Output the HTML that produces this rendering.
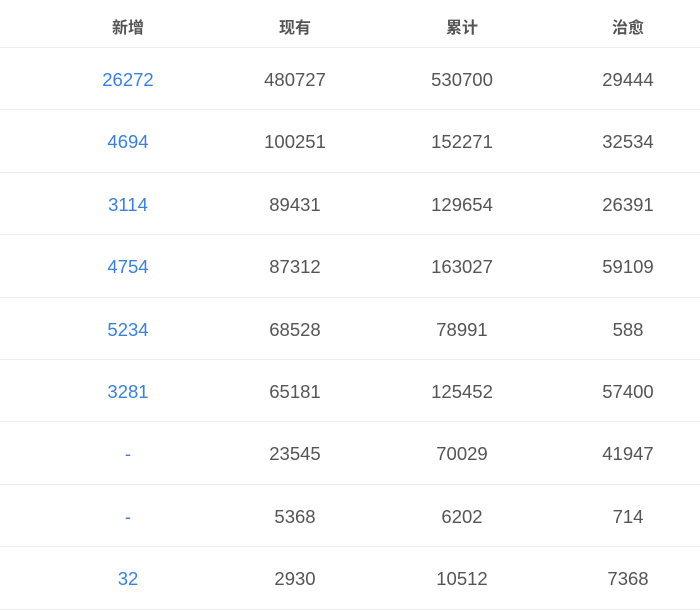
<!DOCTYPE html>
<html><head><meta charset="utf-8"><style>
body{margin:0;width:700px;height:600px;background:#fff;overflow:hidden;font-family:"Liberation Sans","Noto Sans CJK SC",sans-serif;}
.row{position:absolute;left:0;width:700px;border-bottom:1px solid #ededed;}
.c{position:absolute;width:200px;text-align:center;color:#555;font-size:18.5px;}
.h .c{font-weight:bold;font-size:16px;color:#555;}
</style></head><body>
<div class="row h" style="top:0;height:47px"><div class="c" style="left:28px;top:14px">新增</div><div class="c" style="left:195px;top:14px">现有</div><div class="c" style="left:362px;top:14px">累计</div><div class="c" style="left:528px;top:14px">治愈</div></div>
<div id="rows"></div>
<script>
var d=[["26272","480727","530700","29444"],["4694","100251","152271","32534"],["3114","89431","129654","26391"],["4754","87312","163027","59109"],["5234","68528","78991","588"],["3281","65181","125452","57400"],["-","23545","70029","41947"],["-","5368","6202","714"],["32","2930","10512","7368"]];
var L=[28,195,362,528],h="";
d.forEach(function(r,i){var top=48+i*62.4;h+='<div class="row" style="top:'+top+'px;height:61.4px">';r.forEach(function(v,j){h+='<div class="c" style="left:'+L[j]+'px;top:21px;'+(j==0?'color:#3a80e0;':'')+'">'+v+'</div>';});h+='</div>';});
document.getElementById('rows').innerHTML=h;
</script>
</body></html>
